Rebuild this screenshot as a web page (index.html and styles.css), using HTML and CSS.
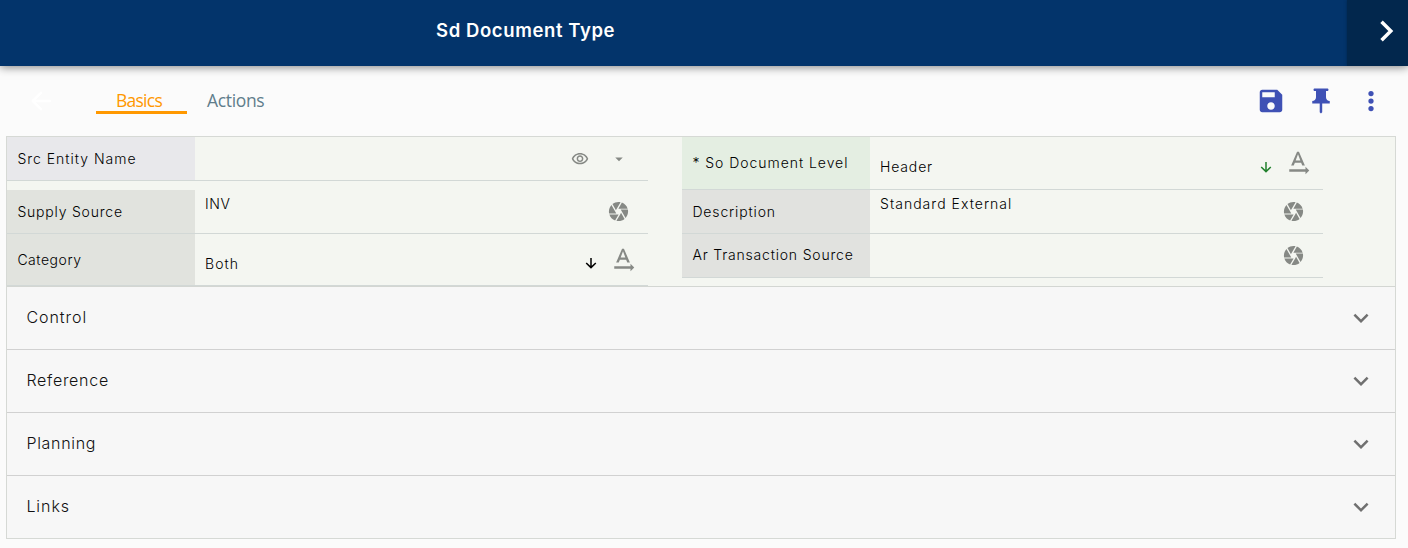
FILE: index.html
```html
<!DOCTYPE html>
<html lang="en">
<head>
<meta charset="utf-8">
<title>Sd Document Type</title>
<link rel="stylesheet" href="styles.css">
</head>
<body>
<svg class="sprite" aria-hidden="true">
  <symbol id="camera" viewBox="0 0 24 24"><path d="M9.4 10.5l4.77-8.26C13.47 2.09 12.75 2 12 2c-2.4 0-4.6.85-6.32 2.25l3.66 6.35.06-.1zM21.54 9c-.92-2.92-3.15-5.26-6-6.34L11.88 9h9.66zm.26 1h-7.49l.29.5 4.76 8.25C21 16.97 22 14.61 22 12c0-.69-.07-1.35-.2-2zM8.54 12l-3.9-6.75C3.01 7.03 2 9.39 2 12c0 .69.07 1.35.2 2h7.49l-1.15-2zm-6.08 3c.92 2.92 3.15 5.26 6 6.34L12.12 15H2.46zm11.27 0l-3.9 6.76c.7.15 1.42.24 2.17.24 2.4 0 4.6-.85 6.32-2.25l-3.66-6.35-.93 1.6z"/></symbol>
  <symbol id="rotation" viewBox="0 0 24 24"><path d="M21 18l-3-3v2H5v2h13v2l3-3zM9.5 11.8h5l.9 2.2h2.1L12.75 3h-1.5L6.5 14h2.1l.9-2.2zM12 4.98L13.87 10h-3.74L12 4.98z"/></symbol>
  <symbol id="down" viewBox="0 0 12 12"><path d="M6 1v9.6M1.2 6L6 10.6 10.8 6" fill="none" stroke="currentColor" stroke-width="1.5"/></symbol>
  <symbol id="expand" viewBox="0 0 24 24"><path d="M16.59 8.59L12 13.17 7.41 8.59 6 10l6 6 6-6z"/></symbol>
</svg>

<header class="topbar">
  <h1 class="title">Sd Document Type</h1>
  <button class="next" aria-label="Next"><svg class="next-icon" viewBox="0 0 16 22"><path d="M3 2.5L11.5 11 3 19.5"/></svg></button>
</header>

<main class="page">
  <div class="toolbar">
    <svg class="icon back" viewBox="0 0 24 24"><path d="M19 11H7.83l4.88-4.88c.39-.39.39-1.03 0-1.42-.39-.39-1.02-.39-1.41 0l-6.59 6.59c-.39.39-.39 1.02 0 1.41l6.59 6.59c.39.39 1.02.39 1.41 0 .39-.39.39-1.02 0-1.41L7.83 13H19c.55 0 1-.45 1-1s-.45-1-1-1z"/></svg>
    <nav class="tabs">
      <a class="tab active"><span class="t-basics">Basics</span></a>
      <a class="tab"><span class="t-actions">Actions</span></a>
    </nav>
    <div class="actions">
      <svg class="icon" viewBox="0 0 24 24"><path d="M17 3H5c-1.110 0-2 .9-2 2v14c0 1.100.89 2 2 2h14c1.100 0 2-.9 2-2V7l-4-4zm-5 16c-1.660 0-3-1.340-3-3s1.340-3 3-3 3 1.340 3 3-1.340 3-3 3zm3-10H5V5h10v4z"/></svg>
      <svg class="icon" viewBox="0 0 24 24"><path d="M16 9V4h1c.55 0 1-.45 1-1s-.45-1-1-1H7c-.55 0-1 .45-1 1s.45 1 1 1h1v5c0 1.660-1.340 3-3 3v2h5.970v7l1 1 1-1v-7H19v-2c-1.660 0-3-1.340-3-3z"/></svg>
      <svg class="icon" viewBox="0 0 24 24"><circle cx="12" cy="6" r="2.100"/><circle cx="12" cy="12" r="2.100"/><circle cx="12" cy="18" r="2.100"/></svg>
    </div>
  </div>

  <div class="panel">
    <section class="basics">
      <div class="column">
        <div class="field entity">
          <label class="label"><span class="l-entity">Src Entity Name</span></label>
          <span class="value"></span>
          <div class="tools">
            <svg class="small" viewBox="0 0 24 24"><path d="M12 6c3.790 0 7.170 2.130 8.820 5.500C19.170 14.870 15.790 17 12 17s-7.170-2.130-8.820-5.500C4.830 8.130 8.210 6 12 6m0-2C7 4 2.730 7.110 1 11.500 2.730 15.890 7 19 12 19s9.270-3.110 11-7.500C21.270 7.110 17 4 12 4zm0 5c1.380 0 2.500 1.120 2.500 2.500S13.380 14 12 14s-2.500-1.120-2.500-2.500S10.620 9 12 9m0-2c-2.480 0-4.500 2.020-4.500 4.500S9.520 16 12 16s4.500-2.020 4.500-4.500S14.480 7 12 7z"/></svg>
            <svg class="small" viewBox="0 0 24 24"><path d="M7 10l5 5 5-5z"/></svg>
          </div>
        </div>
        <div class="field supply">
          <label class="label"><span class="l-supply">Supply Source</span></label>
          <span class="value high"><span class="v-inv">INV</span></span>
          <div class="tools"><svg class="camera"><use href="#camera"/></svg></div>
        </div>
        <div class="field category">
          <label class="label"><span class="l-category">Category</span></label>
          <span class="value low"><span class="v-both">Both</span></span>
          <div class="tools select"><svg class="down"><use href="#down"/></svg><svg class="rotation"><use href="#rotation"/></svg></div>
        </div>
      </div>
      <div class="column">
        <div class="field level">
          <label class="label"><span class="l-level">* So Document Level</span></label>
          <span class="value low"><span class="v-header">Header</span></span>
          <div class="tools select"><svg class="down green"><use href="#down"/></svg><svg class="rotation"><use href="#rotation"/></svg></div>
        </div>
        <div class="field description">
          <label class="label"><span class="l-description">Description</span></label>
          <span class="value high"><span class="v-standard">Standard External</span></span>
          <div class="tools"><svg class="camera"><use href="#camera"/></svg></div>
        </div>
        <div class="field transaction">
          <label class="label"><span class="l-transaction">Ar Transaction Source</span></label>
          <span class="value"></span>
          <div class="tools"><svg class="camera"><use href="#camera"/></svg></div>
        </div>
      </div>
    </section>
    <section class="fold"><span class="f-control">Control</span><svg class="chevron"><use href="#expand"/></svg></section>
    <section class="fold"><span class="f-reference">Reference</span><svg class="chevron"><use href="#expand"/></svg></section>
    <section class="fold"><span class="f-planning">Planning</span><svg class="chevron"><use href="#expand"/></svg></section>
    <section class="fold"><span class="f-links">Links</span><svg class="chevron"><use href="#expand"/></svg></section>
  </div>
</main>
</body>
</html>
```
FILE: styles.css
```css
* { box-sizing: border-box; }
body { margin: 0; background: #fbfbfb; color: #000; font-family: Inter, sans-serif; height: 548px; overflow: hidden; }
svg { display: block; flex: none; fill: currentColor; }
.sprite { width: 0; height: 0; position: absolute; }

.topbar { position: relative; display: flex; justify-content: space-between; height: 66px; background: #03346b; box-shadow: 0 1px 9px rgba(0, 0, 0, .5); }
.title { margin: 0 0 0 436px; font-size: 18.5px; line-height: 61px; font-weight: 600; color: #fff; letter-spacing: .6px; white-space: nowrap; }
.next { width: 61px; border: 0; padding: 19px 0 0 31px; background: #02274d; color: #fff; display: flex; align-items: flex-start; box-shadow: 0 0 3px #02274d; clip-path: inset(0 0 0 -4px); }
.next-icon { width: 18px; height: 24px; fill: none; stroke: #fff; stroke-width: 3.2; }

.page { padding: 0 12px 0 6px; }
.toolbar { display: flex; height: 70px; padding: 19px 10px 0 20px; }
.icon { width: 30px; height: 30px; }
.back { color: #fff; margin-top: 1px; }
.tabs { display: flex; margin-left: 40px; }
.tab { width: 91px; height: 29px; padding-left: 20px; color: #607d8b; font: 17.5px/30px "Open Sans", sans-serif; white-space: nowrap; }
.t-basics { letter-spacing: -.75px; }
.t-actions { letter-spacing: -.35px; }
.active { color: #ff9800; border-bottom: 3px solid #ff9800; }
.actions { display: flex; gap: 20px; margin-left: auto; color: #3f51b5; margin-top: 1px; }

.panel { border: 1px solid #d6d9d5; }
.basics { display: flex; gap: 35px; height: 150px; background: #f4f6f1; border-bottom: 1px solid #d3d6d2; }
.column { width: 641px; margin-right: -1px; }
.field { display: flex; height: 44px; border-bottom: 1px solid #d2d8d6; font-size: 14px; font-weight: 300; line-height: 20px; white-space: nowrap; }
.entity { margin-bottom: 9px; }
.category { height: 52px; }
.level { height: 53px; }
.label { display: flex; align-items: center; width: 188px; padding-left: 10.4px; background: #e1e3de; }
.entity .label { background: #e8e8eb; }
.level .label { background: #e4eee2; }
.description .label, .transaction .label { background: #e1e2df; }
.transaction .label { padding-bottom: 2px; }
.l-entity { letter-spacing: .99px; }
.l-supply { letter-spacing: .8px; }
.l-category { letter-spacing: .54px; }
.l-level { letter-spacing: .96px; }
.l-description { letter-spacing: .86px; }
.l-transaction { letter-spacing: .81px; }
.v-inv { letter-spacing: .6px; }
.v-both { letter-spacing: 1.05px; }
.v-header { letter-spacing: .85px; }
.v-standard { letter-spacing: 1.03px; }
.value { flex: 1; padding-left: 10px; }
.high { padding-top: 4px; }
.low { padding-top: 20px; }
.tools { display: flex; align-items: center; gap: 20px; color: #868985; padding-right: 17.7px; }
.small { width: 18px; height: 18px; margin-top: 1px; }
.entity .tools { padding-right: 20.5px; gap: 20.5px; }
.camera { width: 23px; height: 23px; }
.select { gap: 11px; padding-right: 10.2px; align-items: flex-start; }
.down { width: 12px; height: 12px; margin-top: 24px; color: #000; }
.green { color: #21802d; }
.rotation { width: 30px; height: 30px; margin-top: 11px; }
.category .down { margin-top: 23px; }

.fold { display: flex; justify-content: space-between; align-items: center; height: 63px; padding: 0 19px 2px 19.4px; background: #f7f7f7; border-bottom: 1px solid #d1d1d1; font-size: 16px; font-weight: 300; color: #111; }
.fold:last-child { border-bottom: 0; height: 62px; }
.f-control { letter-spacing: .95px; }
.f-reference { letter-spacing: .72px; }
.f-planning { letter-spacing: .7px; }
.f-links { letter-spacing: .95px; }
.chevron { width: 30px; height: 30px; color: #707070; margin-top: 2px; }
```
